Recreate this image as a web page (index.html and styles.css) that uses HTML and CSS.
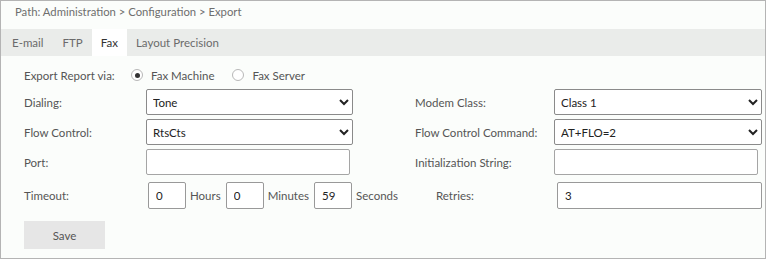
FILE: index.html
```html
<!DOCTYPE html>
<html lang="en">
<head>
  <meta charset="UTF-8" />
  <title>Export - Fax</title>
  <link rel="stylesheet" href="styles.css">
</head>
<body>
  <div class="panel">
    <div class="path">Path: Administration &gt; Configuration &gt; Export</div>
    <div class="tabs">
      <a href="#" class="tab">E-mail</a>
      <a href="#" class="tab">FTP</a>
      <a href="#" class="tab active">Fax</a>
      <a href="#" class="tab">Layout Precision</a>
    </div>
    <form class="fax-form">
      <div class="via-row">
        <span class="via-label">Export Report via:</span>
        <label class="radio"><input type="radio" name="via" checked /> Fax Machine</label>
        <label class="radio"><input type="radio" name="via" /> Fax Server</label>
      </div>
      <div class="fields">
        <label>Dialing:</label>
        <select><option>Tone</option><option>Pulse</option></select>
        <label class="col2">Modem Class:</label>
        <select><option>Class 1</option><option>Class 2</option></select>

        <label>Flow Control:</label>
        <select><option>RtsCts</option><option>XonXoff</option></select>
        <label class="col2">Flow Control Command:</label>
        <select><option>AT+FLO=2</option><option>AT+FLO=1</option></select>

        <label>Port:</label>
        <input type="text" class="short" />
        <label class="col2">Initialization String:</label>
        <input type="text" class="short" />
      </div>
      <div class="timeout-row">
        <span class="row-label">Timeout:</span>
        <div class="timeout">
          <input type="text" value="0" /> <span>Hours</span>
          <input type="text" value="0" /> <span>Minutes</span>
          <input type="text" value="59" /> <span>Seconds</span>
        </div>
        <span class="retries-label">Retries:</span>
        <input type="text" class="retries" value="3" />
      </div>
      <button type="button" class="save">Save</button>
    </form>
  </div>
</body>
</html>
```

FILE: styles.css
```css
* {
  margin: 0; padding: 0; box-sizing: border-box;
  font-family: 'Lato', 'Liberation Sans', sans-serif;
}
body {
  background: #fff; color: #555; font-size: 11.5px;
}
.panel {
  width: 766px; height: 259px;
  border: 1px solid #b4b4b4;
  background: #fbfdfb;
}
.path {
  height: 28px; line-height: 22px;
  padding-left: 14px; color: #6e6e6e; font-size: 11.3px;
}
.tabs {
  display: flex; height: 27px;
  background: #eaecea;
}
.tab {
  display: flex; align-items: center;
  padding: 0 9px; text-decoration: none;
  color: #6b6b6b; font-size: 11.5px;
}
.tab:first-child {
  padding-left: 11px; padding-right: 10px;
}
.tab.active {
  background: #fff; color: #333;
}
.fax-form {
  padding: 8px 3px 0 23px;
}
.via-row {
  display: flex; align-items: center; height: 22px;
  margin-bottom: 3px;
}
.via-label {
  flex: none; width: 107px;
}
.radio {
  display: flex; align-items: center; gap: 8px;
  margin-right: 18px; color: #555;
}
.radio input {
  appearance: none; width: 12px; height: 12px;
  border: 1px solid #b8b8b8; border-radius: 50%;
  background: #fff; margin: 0;
  display: grid; place-items: center;
}
.radio input:checked::after {
  content: ""; width: 5px; height: 5px;
  border-radius: 50%; background: #333;
}
.fields {
  display: grid;
  grid-template-columns: 122px 207px 201px 208px;
  row-gap: 4px;
  align-items: center;
}
.fields .col2 {
  padding-left: 62px;
}
.fields select, .fields input, .timeout-row input {
  height: 26px; font-size: 11.5px; color: #222;
  border: 1px solid #8a8a8a; border-radius: 2px;
  background: #fff; padding: 0 2px;
}
.fields input {
  padding: 0 6px;
}
.fields input.short {
  width: 204px; border-color: #a5a5a5;
}
.timeout-row {
  display: flex; align-items: center;
  margin-top: 7px; height: 27px;
}
.row-label {
  flex: none; width: 124px;
}
.timeout {
  flex: none; width: 288px;
  display: flex; align-items: center; gap: 4px;
}
.timeout-row input {
  width: 38px; height: 27px; padding: 0 7px;
  border-color: #999;
}
.timeout span {
  margin-right: 1px;
}
.retries-label {
  flex: none; width: 121px;
}
.timeout-row input.retries {
  width: 205px; padding: 0 7px;
}
.save {
  display: block; margin-top: 12px;
  width: 81px; height: 28px;
  background: #e6e6e6; border: none;
  color: #555; font-size: 11.5px;
}
```
